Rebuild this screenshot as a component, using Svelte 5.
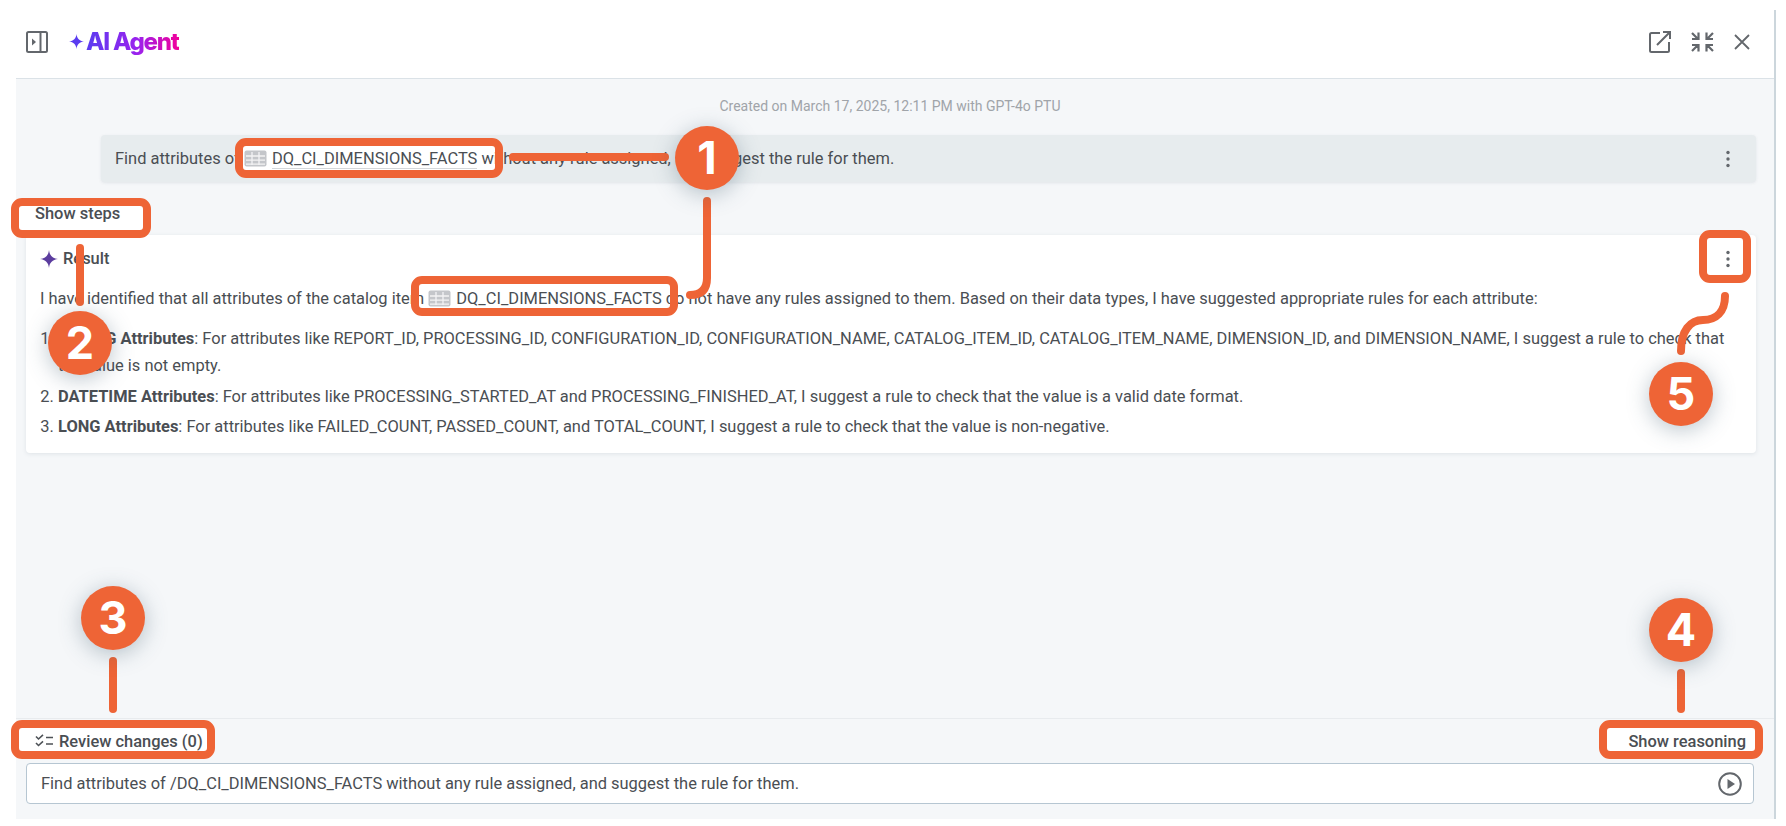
<script lang="ts">
    // annotation frames: outer edges in page pixels
    const marks = [
        { x: 235, y: 138, w: 268, h: 40 },
        { x: 411, y: 276, w: 267, h: 40 },
        { x: 11, y: 198, w: 140, h: 40 },
        { x: 1699, y: 230, w: 52, h: 53 },
        { x: 11, y: 720, w: 204, h: 39 },
        { x: 1599, y: 720, w: 164, h: 39 }
    ];
    const leaders = [
        'M513 157H665',
        'M707 201V278Q707 295 690 295',
        'M80 248V302',
        'M113 661V709',
        'M1681 673V709',
        'M1725 296C1725 312 1716 320 1703 320C1690 320 1681 331 1681 351'
    ];
    const badges = [
        { n: 1, x: 707, y: 158 },
        { n: 2, x: 80, y: 343 },
        { n: 3, x: 113, y: 618 },
        { n: 4, x: 1681, y: 630 },
        { n: 5, x: 1681, y: 394 }
    ];
</script>

{#snippet tableIcon()}
    <svg class="table-icon" viewBox="0 0 23 17" aria-hidden="true">
        <rect x="0.5" y="0.5" width="22" height="16" rx="2" fill="#c4c6ca" />
        <path d="M2 6h19M2 10.2h19M2 14.2h19M8 2v13M15 2v13" stroke="#f3f3f4" stroke-width="1.3" fill="none" />
    </svg>
{/snippet}

{#snippet kebab()}
    <svg class="kebab" viewBox="0 0 6 18" aria-hidden="true">
        <circle cx="3" cy="2.5" r="1.7" />
        <circle cx="3" cy="9" r="1.7" />
        <circle cx="3" cy="15.5" r="1.7" />
    </svg>
{/snippet}

<div class="page">
    <svg class="layer under" viewBox="0 0 1786 826" aria-hidden="true">
        {#each marks as m}
            <rect x={m.x + 4} y={m.y + 4} width={m.w - 8} height={m.h - 8} fill="#fff" />
        {/each}
    </svg>

    <div class="panel">
        <header class="top">
            <div class="top-left">
                <svg class="ico-side" viewBox="0 0 22 22" aria-hidden="true">
                    <rect x="1" y="1" width="20" height="20" rx="1.5" fill="none" stroke="#63676c" stroke-width="2" />
                    <path d="M14.5 1v20" stroke="#63676c" stroke-width="2" />
                    <path d="M6 7.5l4 3.5-4 3.5z" fill="#63676c" />
                </svg>
                <div class="logo">
                    <svg class="logo-star" viewBox="0 0 16 16" aria-hidden="true">
                        <path d="M8 0C8.6 5 11 7.4 16 8C11 8.6 8.6 11 8 16C7.4 11 5 8.6 0 8C5 7.4 7.4 5 8 0Z" fill="#5a3cf0" />
                    </svg>
                    <span class="logo-text">AI Agent</span>
                </div>
            </div>
            <div class="top-right">
                <svg class="ico-open" viewBox="0 0 22 22" aria-hidden="true">
                    <path d="M11 2H2.5A1.5 1.5 0 0 0 1 3.500V19.500A1.500 1.500 0 0 0 2.500 21H18.500A1.500 1.500 0 0 0 20 19.500V11" fill="none" stroke="#63676c" stroke-width="2" />
                    <path d="M14 1H21V8M21 1L8 14" fill="none" stroke="#63676c" stroke-width="2" />
                </svg>
                <svg class="ico-shrink" viewBox="0 0 23 22" aria-hidden="true">
                    <path d="M1 2l5 5M7.500 1.500V8H1M22 2l-5 5M15.500 1.500V8H22M1 20l5-5M7.500 20.500V14H1M22 20l-5-5M15.500 20.500V14H22" fill="none" stroke="#63676c" stroke-width="2.200" />
                </svg>
                <svg class="ico-close" viewBox="0 0 16 16" aria-hidden="true">
                    <path d="M1 1L15 15M15 1L1 15" stroke="#63676c" stroke-width="1.800" fill="none" />
                </svg>
            </div>
        </header>

        <main class="body">
            <p class="stamp">Created on March 17, 2025, 12:11 PM with GPT-4o PTU</p>

            <div class="message">
                <span class="txt">Find attributes of <span class="chip">{@render tableIcon()}<span class="chip-name">DQ_CI_DIMENSIONS_FACTS</span></span> without any rule assigned, and suggest the rule for them.</span>
                {@render kebab()}
            </div>

            <div class="steps"><span class="txt strong">Show steps</span></div>

            <section class="card">
                <div class="card-head">
                    <div class="result">
                        <svg class="result-star" viewBox="0 0 18 18" aria-hidden="true">
                            <path d="M9 0C9.600 5.500 12.500 8.400 18 9C12.500 9.600 9.600 12.500 9 18C8.400 12.500 5.500 9.600 0 9C5.500 8.400 8.400 5.500 9 0Z" fill="#5b3c9e" />
                        </svg>
                        <span class="txt strong">Result</span>
                    </div>
                    {@render kebab()}
                </div>
                <p class="para">I have identified that all attributes of the catalog item <span class="chip">{@render tableIcon()}<span class="chip-name">DQ_CI_DIMENSIONS_FACTS</span></span> do not have any rules assigned to them. Based on their data types, I have suggested appropriate rules for each attribute:</p>
                <ol class="list">
                    <li><b>STRING Attributes</b>: For attributes like REPORT_ID, PROCESSING_ID, CONFIGURATION_ID, CONFIGURATION_NAME, CATALOG_ITEM_ID, CATALOG_ITEM_NAME, DIMENSION_ID, and DIMENSION_NAME, I suggest a rule to check that the value is not empty.</li>
                    <li><b>DATETIME Attributes</b>: For attributes like PROCESSING_STARTED_AT and PROCESSING_FINISHED_AT, I suggest a rule to check that the value is a valid date format.</li>
                    <li><b>LONG Attributes</b>: For attributes like FAILED_COUNT, PASSED_COUNT, and TOTAL_COUNT, I suggest a rule to check that the value is non-negative.</li>
                </ol>
            </section>

            <footer class="foot">
                <div class="foot-row">
                    <span class="txt strong review">
                        <svg class="ico-review" viewBox="0 0 18 14" aria-hidden="true">
                            <path d="M1 2.500l2.500 2.500L8 .8M1 9l2.500 2.500L8 7.300" fill="none" stroke="#4d5156" stroke-width="1.600" />
                            <path d="M11 3.500h7M11 10h7" stroke="#4d5156" stroke-width="1.600" />
                        </svg>
                        Review changes (0)
                    </span>
                    <span class="txt strong">Show reasoning</span>
                </div>
                <div class="input">
                    <span>Find attributes of /DQ_CI_DIMENSIONS_FACTS without any rule assigned, and suggest the rule for them.</span>
                    <svg class="ico-play" viewBox="0 0 24 24" aria-hidden="true">
                        <circle cx="12" cy="12" r="10.800" fill="none" stroke="#63676c" stroke-width="2" />
                        <path d="M9.500 7l7.500 5-7.500 5z" fill="#63676c" />
                    </svg>
                </div>
            </footer>
        </main>
    </div>

    <svg class="layer over" viewBox="0 0 1786 826" aria-hidden="true">
        {#each marks as m}
            <rect x={m.x + 4} y={m.y + 4} width={m.w - 8} height={m.h - 8} rx="7" fill="none" stroke="#ee6436" stroke-width="8" />
        {/each}
        {#each leaders as d}
            <path {d} fill="none" stroke="#ee6436" stroke-width="8" stroke-linecap="round" />
        {/each}
    </svg>

    {#each badges as b}
        <div class="badge" style="left:{b.x - 32}px;top:{b.y - 32}px">{b.n}</div>
    {/each}
</div>

<style>
    :global(body) {
        margin: 0;
        background: #fff;
    }

    .page {
        position: relative;
        width: 1786px;
        height: 826px;
        overflow: hidden;
        font-family: Roboto, "Liberation Sans", sans-serif;
        font-size: 16.45px;
        color: #4a4e53;
        box-sizing: border-box;
        padding: 10px 10px 7px 16px;
    }

    .layer {
        position: absolute;
        inset: 0;
        width: 1786px;
        height: 826px;
        pointer-events: none;
    }
    .under { z-index: 1; }
    .over { z-index: 3; }

    .badge {
        position: absolute;
        z-index: 4;
        width: 64px;
        height: 64px;
        border-radius: 50%;
        background: #ee6436;
        color: #fff;
        font-family: Inter, sans-serif;
        font-weight: 700;
        font-size: 45px;
        line-height: 64px;
        text-align: center;
        box-shadow: 0 4px 22px rgba(60, 90, 110, 0.35);
    }

    .panel {
        height: 100%;
        display: flex;
        flex-direction: column;
        border-right: 2px solid #ccd6dc;
    }

    .top {
        height: 69px;
        padding: 0 24px 5px 10px;
        display: flex;
        align-items: center;
        justify-content: space-between;
        border-bottom: 1px solid #dbe2e7;
        flex: none;
        box-sizing: border-box;
    }
    .top-left, .top-right, .logo {
        display: flex;
        align-items: center;
    }
    .top-left { gap: 21px; }
    .top-right { gap: 20px; }
    .logo { gap: 2px; }

    .ico-side { width: 22px; height: 22px; }
    .ico-open { width: 22px; height: 22px; }
    .ico-shrink { width: 23px; height: 22px; }
    .ico-close { width: 16px; height: 16px; }

    .logo-star { width: 15px; height: 15px; }
    .logo-text {
        font-family: Inter, sans-serif;
        font-weight: 800;
        font-size: 24px;
        letter-spacing: -1.2px;
        background: linear-gradient(90deg, #5a3cf0 0%, #9a22ee 55%, #f2009a 100%);
        -webkit-background-clip: text;
        background-clip: text;
        color: transparent;
    }

    .body {
        flex: 1;
        min-height: 0;
        display: flex;
        flex-direction: column;
        background: #f5f7f9;
    }

    .stamp {
        margin: 0;
        padding-top: 19px;
        height: 36px;
        box-sizing: border-box;
        text-align: center;
        font-size: 14px;
        line-height: 17px;
        color: #a0a4a9;
        padding-right: 10px;
    }

    .message {
        margin: 20px 18px 0 85px;
        height: 47px;
        padding: 0 25px 0 14px;
        display: flex;
        align-items: center;
        justify-content: space-between;
        background: #e7ecee;
        border-radius: 4px;
        box-shadow: 0 1px 3px rgba(90, 110, 125, 0.12);
        flex: none;
    }

    .txt, .para, .list, .input span {
        position: relative;
        z-index: 2;
    }
    .strong { font-weight: 500; }

    .chip-name {
        border-bottom: 1px solid #d4d7da;
    }
    .table-icon {
        width: 23px;
        height: 17px;
        margin: 0 5px 0 0;
        vertical-align: -3px;
    }

    .kebab {
        width: 6px;
        height: 18px;
        fill: #63676c;
        position: relative;
        z-index: 2;
        flex: none;
    }

    .steps {
        height: 53px;
        flex: none;
        padding: 23px 0 0 19px;
        box-sizing: border-box;
        line-height: 18px;
    }

    .card {
        margin: 0 18px 0 10px;
        height: 218px;
        box-sizing: border-box;
        background: #fff;
        border-radius: 4px;
        box-shadow: 0 1px 4px rgba(90, 110, 125, 0.14);
        padding: 0 25px 0 14px;
        flex: none;
    }
    .card-head {
        height: 46px;
        display: flex;
        align-items: center;
        justify-content: space-between;
        padding-top: 1px;
        box-sizing: border-box;
    }
    .result {
        display: flex;
        align-items: center;
        gap: 5px;
    }
    .result-star { width: 18px; height: 18px; }

    .para {
        margin: 4px 0 0;
        line-height: 27px;
    }
    .list {
        margin: 13px 0 0;
        padding: 0 0 0 18px;
        line-height: 27px;
    }
    .list li { margin-bottom: 3.5px; }
    .list b { font-weight: 700; }

    .foot {
        margin-top: auto;
        border-top: 1px solid #e8ebee;
        padding: 0 20px 15px 10px;
        flex: none;
    }
    .foot-row {
        height: 44px;
        display: flex;
        align-items: center;
        justify-content: space-between;
        padding: 0 8px 0 9px;
        box-sizing: border-box;
    }
    .review {
        display: inline-flex;
        align-items: center;
        gap: 6px;
    }
    .ico-review { width: 18px; height: 14px; }

    .input {
        height: 41px;
        box-sizing: border-box;
        background: #fff;
        border: 1px solid #b6c6d2;
        border-radius: 4px;
        padding: 0 11px 0 14px;
        display: flex;
        align-items: center;
        justify-content: space-between;
    }
    .ico-play { width: 24px; height: 24px; }
</style>
